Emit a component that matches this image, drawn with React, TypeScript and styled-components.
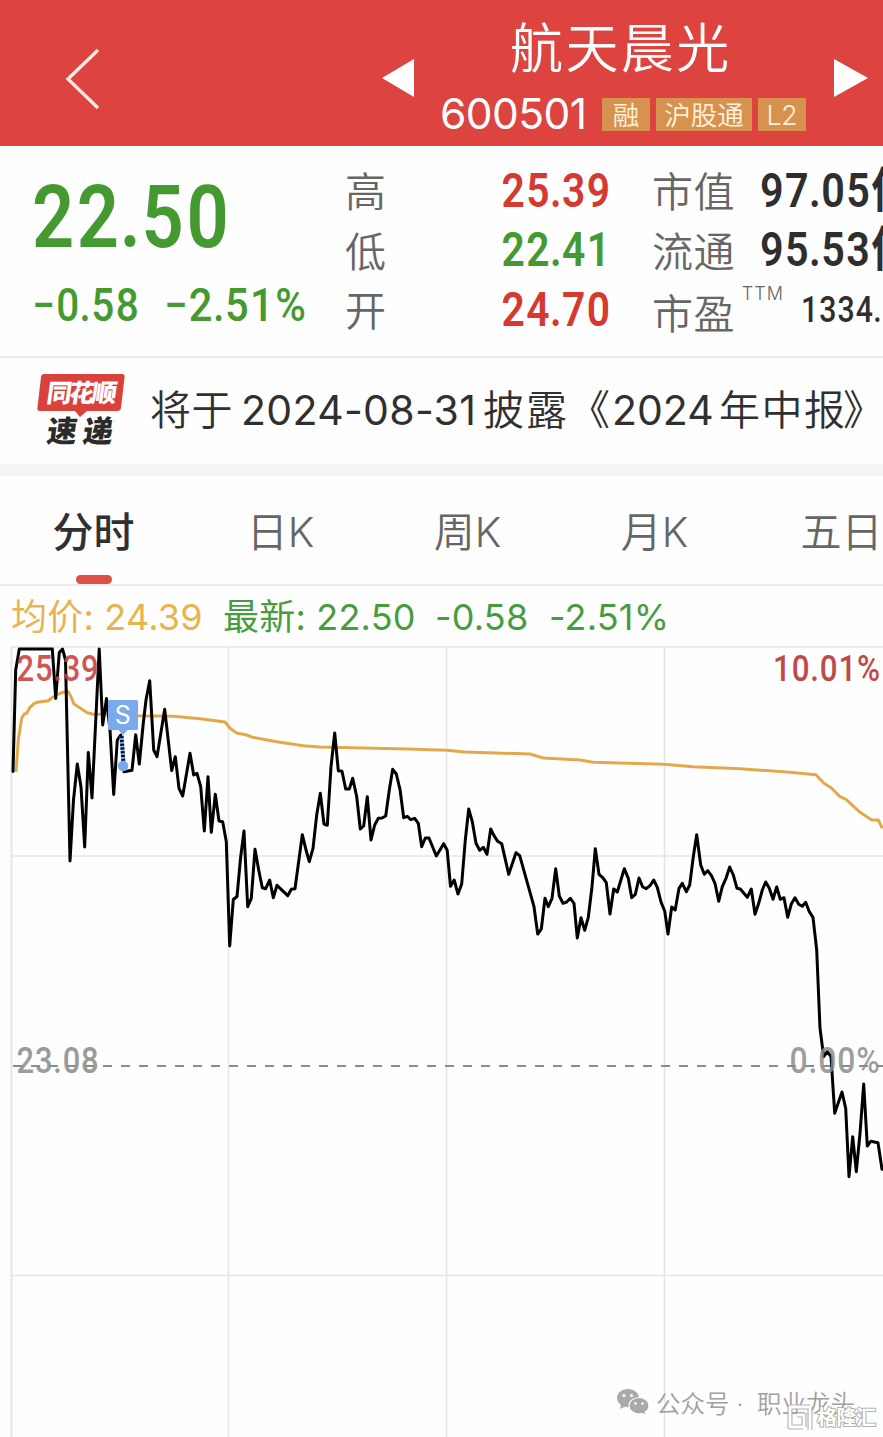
import React from "react";
import styled, { createGlobalStyle } from "styled-components";

const UI = `Inter, "Noto Sans CJK SC", sans-serif`;
const NUM = `Roboto, "Noto Sans CJK SC", sans-serif`;
const RED = "#d43a30";
const GREEN = "#449a30";
const INK = "#2e2e2e";

const Global = createGlobalStyle`
  html, body { margin: 0; padding: 0; background: #fff; }
  body { font-family: ${UI}; overflow: hidden; }
  * { box-sizing: border-box; }
`;

const Page = styled.main`
  width: 883px;
  height: 1437px;
  overflow: hidden;
  background: #fefefe;
  display: flex;
  flex-direction: column;
`;

const Header = styled.header`
  height: 146px;
  flex: none;
  background: #dd433f;
  color: #fff;
  display: flex;
  align-items: flex-start;
`;

const BackIcon = styled.svg`
  margin: 47px 0 0 64px;
  width: 38px;
  height: 64px;
`;

const ArrowIcon = styled.svg<{ $left: number }>`
  margin: 58px 0 0 ${(p) => p.$left}px;
  width: 36px;
  height: 40px;
  flex: none;
`;

const TitleBlock = styled.div`
  margin-left: 24px;
  width: 368px;
  flex: none;
  display: flex;
  flex-direction: column;
`;

const StockName = styled.h1`
  margin: 17px 0 0 70px;
  height: 64px;
  line-height: 64px;
  font-size: 53px;
  font-weight: 350;
  letter-spacing: 2.4px;
  white-space: nowrap;
`;

const CodeRow = styled.div`
  display: flex;
  align-items: center;
  height: 34px;
  margin-top: 16px;
`;

const Code = styled.span`
  width: 162px;
  flex: none;
  font-size: 42.5px;
  font-weight: 380;
  line-height: 34px;
  letter-spacing: -0.6px;
`;

const Tag = styled.span<{ $w: number }>`
  width: ${(p) => p.$w}px;
  height: 33px;
  margin-right: 6px;
  background: #d89250;
  color: #fff3dc;
  font-size: 26.5px;
  font-weight: 350;
  line-height: 34px;
  text-align: center;
  white-space: nowrap;
  flex: none;
`;

const Quote = styled.section`
  height: 212px;
  flex: none;
  display: flex;
  border-bottom: 2px solid #ececec;
  overflow: hidden;
`;

const Narrow = styled.span<{ $right?: boolean; $scale: number }>`
  display: inline-block;
  transform: scaleX(${(p) => p.$scale});
  transform-origin: ${(p) => (p.$right ? "right" : "left")} center;
  letter-spacing: 0.035em;
  white-space: nowrap;
`;

const Dot = styled.span`
  margin: 0 -0.025em;
`;

const Figure = ({ value, right, scale = 0.86 }: { value: string; right?: boolean; scale?: number }) => {
  const [whole, fraction] = value.split(".");
  return (
    <Narrow $right={right} $scale={scale}>
      {whole}
      <Dot>.</Dot>
      {fraction}
    </Narrow>
  );
};

const PriceBlock = styled.div`
  width: 345px;
  flex: none;
  padding: 36px 0 0 32px;
  color: ${GREEN};
  font-family: ${NUM};
  font-weight: 600;
`;

const Price = styled.div`
  font-size: 88px;
  line-height: 70px;
`;

const Change = styled.div`
  display: flex;
  margin-top: 31px;
  font-size: 46px;
  line-height: 44px;
  font-weight: 500;
`;

const ChangeCell = styled.span<{ $w: number }>`
  width: ${(p) => p.$w}px;
  flex: none;
`;

const Stats = styled.dl<{ $w: number; $left: number }>`
  width: ${(p) => p.$w}px;
  margin: 15px 0 0 ${(p) => p.$left}px;
  flex: none;
`;

const Stat = styled.div`
  display: flex;
  align-items: center;
  height: 59.5px;
`;

const StatName = styled.dt<{ $drop?: number }>`
  padding-top: ${(p) => p.$drop ?? 3}px;
  font-size: 41px;
  line-height: 60px;
  font-weight: 350;
  letter-spacing: 0.4px;
  color: #666;
  flex: none;
`;

const StatValue = styled.dd<{ $color: string }>`
  margin: 0 0 0 auto;
  font-family: ${NUM};
  font-weight: 600;
  font-size: 48px;
  line-height: 56px;
  color: ${(p) => p.$color};
  white-space: nowrap;
`;

const WideValue = styled(StatValue)`
  margin-left: 25px;
`;

const SmallValue = styled(StatValue)`
  margin-left: 0;
  font-size: 36px;
  font-weight: 500;
`;

const Ttm = styled.sup`
  align-self: flex-start;
  margin: 5px 0 0 7px;
  width: 59px;
  flex: none;
  font-size: 18px;
  line-height: 18px;
  letter-spacing: 1px;
  font-weight: 300;
  color: #666;
`;

const News = styled.section`
  height: 118px;
  flex: none;
  display: flex;
  align-items: flex-start;
  border-bottom: 12px solid #f4f4f4;
`;

const Logo = styled.svg`
  width: 92px;
  height: 80px;
  margin: 14px 0 0 36px;
  flex: none;
`;

const NewsText = styled.p`
  margin: 21px 0 0 22px;
  display: flex;
  font-size: 41px;
  line-height: 62px;
  color: #303030;
  white-space: nowrap;
`;

const NewsPart = styled.span<{ $ls?: number; $w: number }>`
  width: ${(p) => p.$w}px;
  flex: none;
  letter-spacing: ${(p) => p.$ls ?? 0}px;
`;

const NewsWords = styled(NewsPart)`
  font-weight: 350;
`;

const Tabs = styled.nav`
  height: 110px;
  flex: none;
  display: flex;
  border-bottom: 2px solid #ececec;
`;

const Tab = styled.a<{ $active?: boolean }>`
  width: 187px;
  flex: none;
  display: flex;
  flex-direction: column;
  align-items: center;
  font-size: 41px;
  line-height: 60px;
  padding-top: 26px;
  font-weight: ${(p) => (p.$active ? 500 : 350)};
  color: ${(p) => (p.$active ? "#303030" : "#666")};
  &::after {
    content: "";
    width: 36px;
    height: 9px;
    margin-top: 13px;
    border-radius: 5px;
    background: ${(p) => (p.$active ? "#dd5048" : "transparent")};
  }
`;

const Legend = styled.div`
  height: 60px;
  flex: none;
  display: flex;
  padding-left: 11px;
  font-size: 36px;
  line-height: 62px;
  white-space: nowrap;
`;

const LegendItem = styled.span<{ $color: string; $w: number }>`
  width: ${(p) => p.$w}px;
  color: ${(p) => p.$color};
  letter-spacing: 0.2px;
`;

const ChartBox = styled.section`
  position: relative;
  height: 791px;
  flex: none;
`;

const Chart = styled.svg`
  display: block;
`;

const Watermark = styled.div`
  position: absolute;
  left: 616px;
  top: 736px;
  display: flex;
  align-items: center;
  height: 40px;
  color: #a0a0a0;
  font-size: 24.5px;
  font-weight: 350;
  white-space: nowrap;
`;

const WatermarkLabel = styled.span<{ $left: number; $w?: number }>`
  margin-left: ${(p) => p.$left}px;
  width: ${(p) => (p.$w ? `${p.$w}px` : "auto")};
`;

const BrandOverlay = styled.svg`
  position: absolute;
  left: 0;
  top: 0;
`;

const AVG =
  "16,772 18.3,740 21.7,718.3 24.3,714 26.7,713.3 30,707.3 34.3,703.3 39,702 48.3,700.7 52.7,697.3 60,693.3 64,692 68.3,691.7 71,696.7 74,704 80,708 87.3,712.7 93.3,714.3 106.7,714.3 138,715.7 173.3,716.3 200,718.7 225,722 230,728.3 236.7,733 246.7,735 252.7,737.3 276.7,741.7 303.3,745.7 320,747 406.7,749 446.7,750.3 465,752 530,754 543.3,758 580,760 593.3,762.3 663.3,764.3 693.3,766.7 740,768.7 786.7,772 816,774.7 824,783.3 831.7,788.3 840,796.7 846,799.3 859.3,811.7 871.7,820 878.3,820 882.3,828.3";

const PRICE_A =
  "13,771.5 15.7,670 19.3,649 52.3,649 55.7,698.5 59.3,652.5 62.5,649 65.5,660 70,861 73.5,800 77.3,764 81,787 84.7,847 88.3,752.5 92,798 99.2,649 102.7,725 106.5,698.5 110,730 113.7,794.5 117.3,740 120.7,735";

const PRICE_B =
  "124,771.8 132,770.3 135.7,734.7 139.3,764 143.3,723 146,700 149.7,680.7 153.7,750 157,756.7 164.7,709.3 171.7,770.5 175.3,756.7 179,788.3 182.7,796 190,753.3 193.7,775 197,773.3 200.7,786.7 204.3,831 208,776.7 211.3,832.3 215.3,794.3 219,821 222.7,821.7 226.3,841.7 229.7,946 233.3,899.5 237,896.5 240.7,856.7 244,831 247.7,906.7 251.3,898.3 255,849.3 258.7,870 262.3,887.7 265.7,888.7 269.7,880 273.3,897.7 277,885.3 287.7,895.7 291.3,889.3 295,888.7 302.3,834.7 306,850 309.3,861.7 313,848.3 316.7,815 320.3,793.3 324,824 327.3,825.3 331,766.7 334.7,733 338.3,770.7 342,771.3 345.7,789 349.3,789 352.7,778.3 356.7,796.7 360.3,829 363.7,826 367.3,796.7 371,840 374.7,825 378.3,818.3 382,818 385.7,816 389.3,790 392.7,769.3 396.3,774 400,789.3 403.7,817.7 407.3,816.3 410.7,819.7 414.7,818.3 418.3,823.3 421.7,846.7 425.3,838 429,838 436.3,856 443.7,843.7 447.2,850.3 450.5,886.3 454.2,880 458,894 461.7,884 465.3,840 468.7,809 472.3,821.7 476,843.3 479.7,850.3 483.3,847.3 487,854.3 490.7,829 494,835.7 497.7,841.3 501.7,843.7 508.7,874.3 516,852.7 519.7,855.7 534,906.7 537.7,934 541.3,929 545,898.3 548.3,906.7 552,898.3 555.7,868.7 559.3,896 563,903.3 566.7,902 570.3,898.3 574,903.3 577.3,938 581,917.7 584.7,930.3 588.3,917.3 592,886.7 595.3,848.7 599,874.3 602.7,877.7 606.3,882.7 610,914 613.7,889 617.3,892 624.3,868.7 628.3,878.3 631.7,897.7 635.3,894.3 639,878 642.7,887 646.3,888.7 650,885.7 653.7,880 657.3,887.3 661,902 664.7,911 668,934 671.7,907 675.2,910 679,888.3 682.3,883.3 686.3,891.7 689.7,885 693.3,856.7 696.7,834.7 700.7,865 704.3,874.3 707.7,870.7 711.3,875.3 715,883.3 718.7,901.3 722.3,886.7 726,878.3 729.7,867 733.3,875 737,888.3 740.3,889 747.3,897.3 751.3,889 755,914.3 758.7,903.3 762.3,890 765.7,882 769.3,888.3 773,899.3 776.7,887 780.3,899.3 784,897.7 787.7,917.3 791.3,904 795,897.7 798.7,904.3 802.3,906.3 805.7,902.3 809.3,911.7 813,917.3 816.7,950 820,1028.3 823.7,1056.7 827.3,1051.7 831,1056.7 834.7,1113.3 842,1092 845.7,1108.3 849,1176.7 852.7,1136.7 856.3,1171.7 860,1133.3 863.7,1084 867.3,1146 870.7,1141.3 878,1142.7 882,1169.3";

const WeChatIcon = () => (
  <svg width="34" height="28" viewBox="0 0 34 28">
    <path d="M12 1C5.500 1 1 5 1 10c0 3 1.500 5.300 4 7l-1 4 4.500-2.200c1.200.3 2.300.5 3.500.5C18 19.300 23 15 23 10S18 1 12 1Z" fill="#a9a9a9" />
    <path d="M23 9.500c-5.500 0-10 3.600-10 8.200S17.500 26 23 26c1.100 0 2.200-.2 3.200-.5L30 27.500l-.9-3.200c2.200-1.500 3.900-3.800 3.900-6.600 0-4.600-4.500-8.200-10-8.200Z" fill="#a9a9a9" stroke="#fff" strokeWidth="1.200" />
    <g fill="#fff">
      <circle cx="8" cy="7.500" r="1.500" />
      <circle cx="15.500" cy="7.500" r="1.500" />
      <circle cx="19.500" cy="15.500" r="1.300" />
      <circle cx="26.500" cy="15.500" r="1.300" />
    </g>
  </svg>
);

const AxisText = styled.text`
  font-family: ${NUM};
  font-weight: 500;
  font-size: 37.5px;
  letter-spacing: 1px;
`;

const PriceChart = () => (
  <Chart width="883" height="791" viewBox="0 646 883 791" fill="none">
    <g stroke="#e6e6e6" strokeWidth="1.600">
      <path d="M11 647H883M11 856H883M11 1275.500H883M228.500 647V1437M446.500 647V1437M664.500 647V1437" />
      <path d="M11.500 647V1437" strokeWidth="2" />
    </g>
    <path d="M13 1066H883" stroke="#8c8c8c" strokeWidth="1.800" strokeDasharray="9 9" />
    <polyline points={AVG} stroke="#e2a94c" strokeWidth="3" strokeLinejoin="round" />
    <g stroke="#000" strokeWidth="3" strokeLinejoin="round" strokeLinecap="round">
      <polyline points={PRICE_A} />
      <polyline points={PRICE_B} />
    </g>
    <path d="M121.500 736L123.500 762" stroke="#8fb4f0" strokeWidth="4" />
    <path d="M121.500 736L123.500 764" stroke="#06103c" strokeWidth="4" strokeDasharray="2.200 1.600" />
    <path d="M109.500 700H136.500Q138 700 138 701.500V728.500Q138 730 136.500 730H127.500L123 735L118.500 730H109.500Q108 730 108 728.500V701.500Q108 700 109.500 700Z" fill="#7ba9ee" />
    <circle cx="123" cy="766" r="5.300" fill="#7ba9ee" />
    <text x="122.700" y="724" textAnchor="middle" fontFamily={UI} fontSize="25" fill="#fff">S</text>
    <AxisText x="16.500" y="681" textLength="83" lengthAdjust="spacingAndGlyphs" fill="#c8403f" fillOpacity="0.900">25.39</AxisText>
    <AxisText x="773" y="681" textLength="108" lengthAdjust="spacingAndGlyphs" fill="#c04a48">10.01%</AxisText>
    <AxisText x="16.500" y="1072.500" textLength="83" lengthAdjust="spacingAndGlyphs" fill="#8d8d8d" fillOpacity="0.900">23.08</AxisText>
    <AxisText x="789.500" y="1072.500" textLength="91" lengthAdjust="spacingAndGlyphs" fill="#8d8d8d" fillOpacity="0.850">0.00%</AxisText>
  </Chart>
);

const BrandMark = () => (
  <svg x="786" y="1403" width="94" height="30" viewBox="0 0 94 30" strokeLinejoin="round">
    <path d="M24 4H4V24H17M11 12H18V24M24 4V27" fill="none" stroke="#b0b0b0" strokeWidth="5" />
    <path d="M24 4H4V24H17M11 12H18V24M24 4V27" fill="none" stroke="#fff" strokeWidth="2.800" />
    <text x="31" y="22" fontFamily="Noto Sans CJK SC" fontWeight="700" fontSize="20" textLength="59" fill="#fff" stroke="#b0b0b0" strokeWidth="2" paintOrder="stroke">格隆汇</text>
  </svg>
);

export default function App() {
  return (
    <Page>
      <Global />
      <Header>
        <BackIcon viewBox="0 0 38 64" fill="none">
          <path d="M34 3L4 32L34 61" stroke="#ffe9e2" strokeWidth="3.400" />
        </BackIcon>
        <ArrowIcon $left={278} viewBox="0 0 36 40">
          <path d="M2 20L34 1V39Z" fill="#fff" />
        </ArrowIcon>
        <TitleBlock>
          <StockName>航天晨光</StockName>
          <CodeRow>
            <Code>600501</Code>
            <Tag $w={48}>融</Tag>
            <Tag $w={96}>沪股通</Tag>
            <Tag $w={48}>L2</Tag>
          </CodeRow>
        </TitleBlock>
        <ArrowIcon $left={26} viewBox="0 0 36 40">
          <path d="M34 20L0 1V39Z" fill="#fff" />
        </ArrowIcon>
      </Header>

      <Quote>
        <PriceBlock>
          <Price><Figure value="22.50" scale={0.84} /></Price>
          <Change>
            <ChangeCell $w={132}><Figure value="−0.58" scale={0.88} /></ChangeCell>
            <ChangeCell $w={150}><Figure value="−2.51%" scale={0.905} /></ChangeCell>
          </Change>
        </PriceBlock>
        <Stats $w={266} $left={0}>
          <Stat><StatName>高</StatName><StatValue $color={RED}><Figure right value="25.39" scale={0.85} /></StatValue></Stat>
          <Stat><StatName>低</StatName><StatValue $color={GREEN}><Figure right value="22.41" scale={0.85} /></StatValue></Stat>
          <Stat><StatName>开</StatName><StatValue $color={RED}><Figure right value="24.70" scale={0.85} /></StatValue></Stat>
        </Stats>
        <Stats $w={230} $left={41}>
          <Stat><StatName>市值</StatName><WideValue $color={INK}><Figure value="97.05亿" /></WideValue></Stat>
          <Stat><StatName>流通</StatName><WideValue $color={INK}><Figure value="95.53亿" /></WideValue></Stat>
          <Stat><StatName $drop={8}>市盈</StatName><Ttm>TTM</Ttm><SmallValue $color={INK}><Figure value="1334." scale={0.84} /></SmallValue></Stat>
        </Stats>
      </Quote>

      <News>
        <Logo viewBox="0 0 92 80">
          <path d="M8 2H86Q89 2 88.600 5L85 36Q84.500 39 81.500 39H51L44 45L39 39H4Q1 39 1.400 36L5 5Q5.400 2 8 2Z" fill="#d8423b" />
          <g fontFamily="Noto Sans CJK SC" fontWeight="900" transform="skewX(-8)">
            <text x="14" y="30.500" fontSize="25" textLength="70" fill="#fff">同花顺</text>
            <text x="19.500" y="70" fontSize="30" textLength="66" fill="#2b2b2b">速递</text>
          </g>
        </Logo>
        <NewsText>
          <NewsWords $w={91} $ls={0.4}>将于</NewsWords>
          <NewsPart $w={242} $ls={0.3}>2024-08-31</NewsPart>
          <NewsWords $w={129} $ls={2}>披露《</NewsWords>
          <NewsPart $w={107}>2024</NewsPart>
          <NewsWords $w={124} $ls={1.5}>年中报</NewsWords>
          <NewsWords $w={40}>》</NewsWords>
        </NewsText>
      </News>

      <Tabs>
        <Tab $active>分时</Tab>
        <Tab>日K</Tab>
        <Tab>周K</Tab>
        <Tab>月K</Tab>
        <Tab>五日</Tab>
      </Tabs>

      <Legend>
        <LegendItem $color="#e9b44c" $w={212}>均价: 24.39</LegendItem>
        <LegendItem $color="#479d3e" $w={212}>最新: 22.50</LegendItem>
        <LegendItem $color="#479d3e" $w={114}>-0.58</LegendItem>
        <LegendItem $color="#479d3e" $w={130}>-2.51%</LegendItem>
      </Legend>

      <ChartBox>
        <PriceChart />
        <Watermark>
          <WeChatIcon />
          <WatermarkLabel $left={6} $w={101}>公众号 ·</WatermarkLabel>
          <WatermarkLabel $left={0}>职业龙头</WatermarkLabel>
        </Watermark>
        <BrandOverlay width="883" height="791" viewBox="0 646 883 791">
          <BrandMark />
        </BrandOverlay>
      </ChartBox>
    </Page>
  );
}
